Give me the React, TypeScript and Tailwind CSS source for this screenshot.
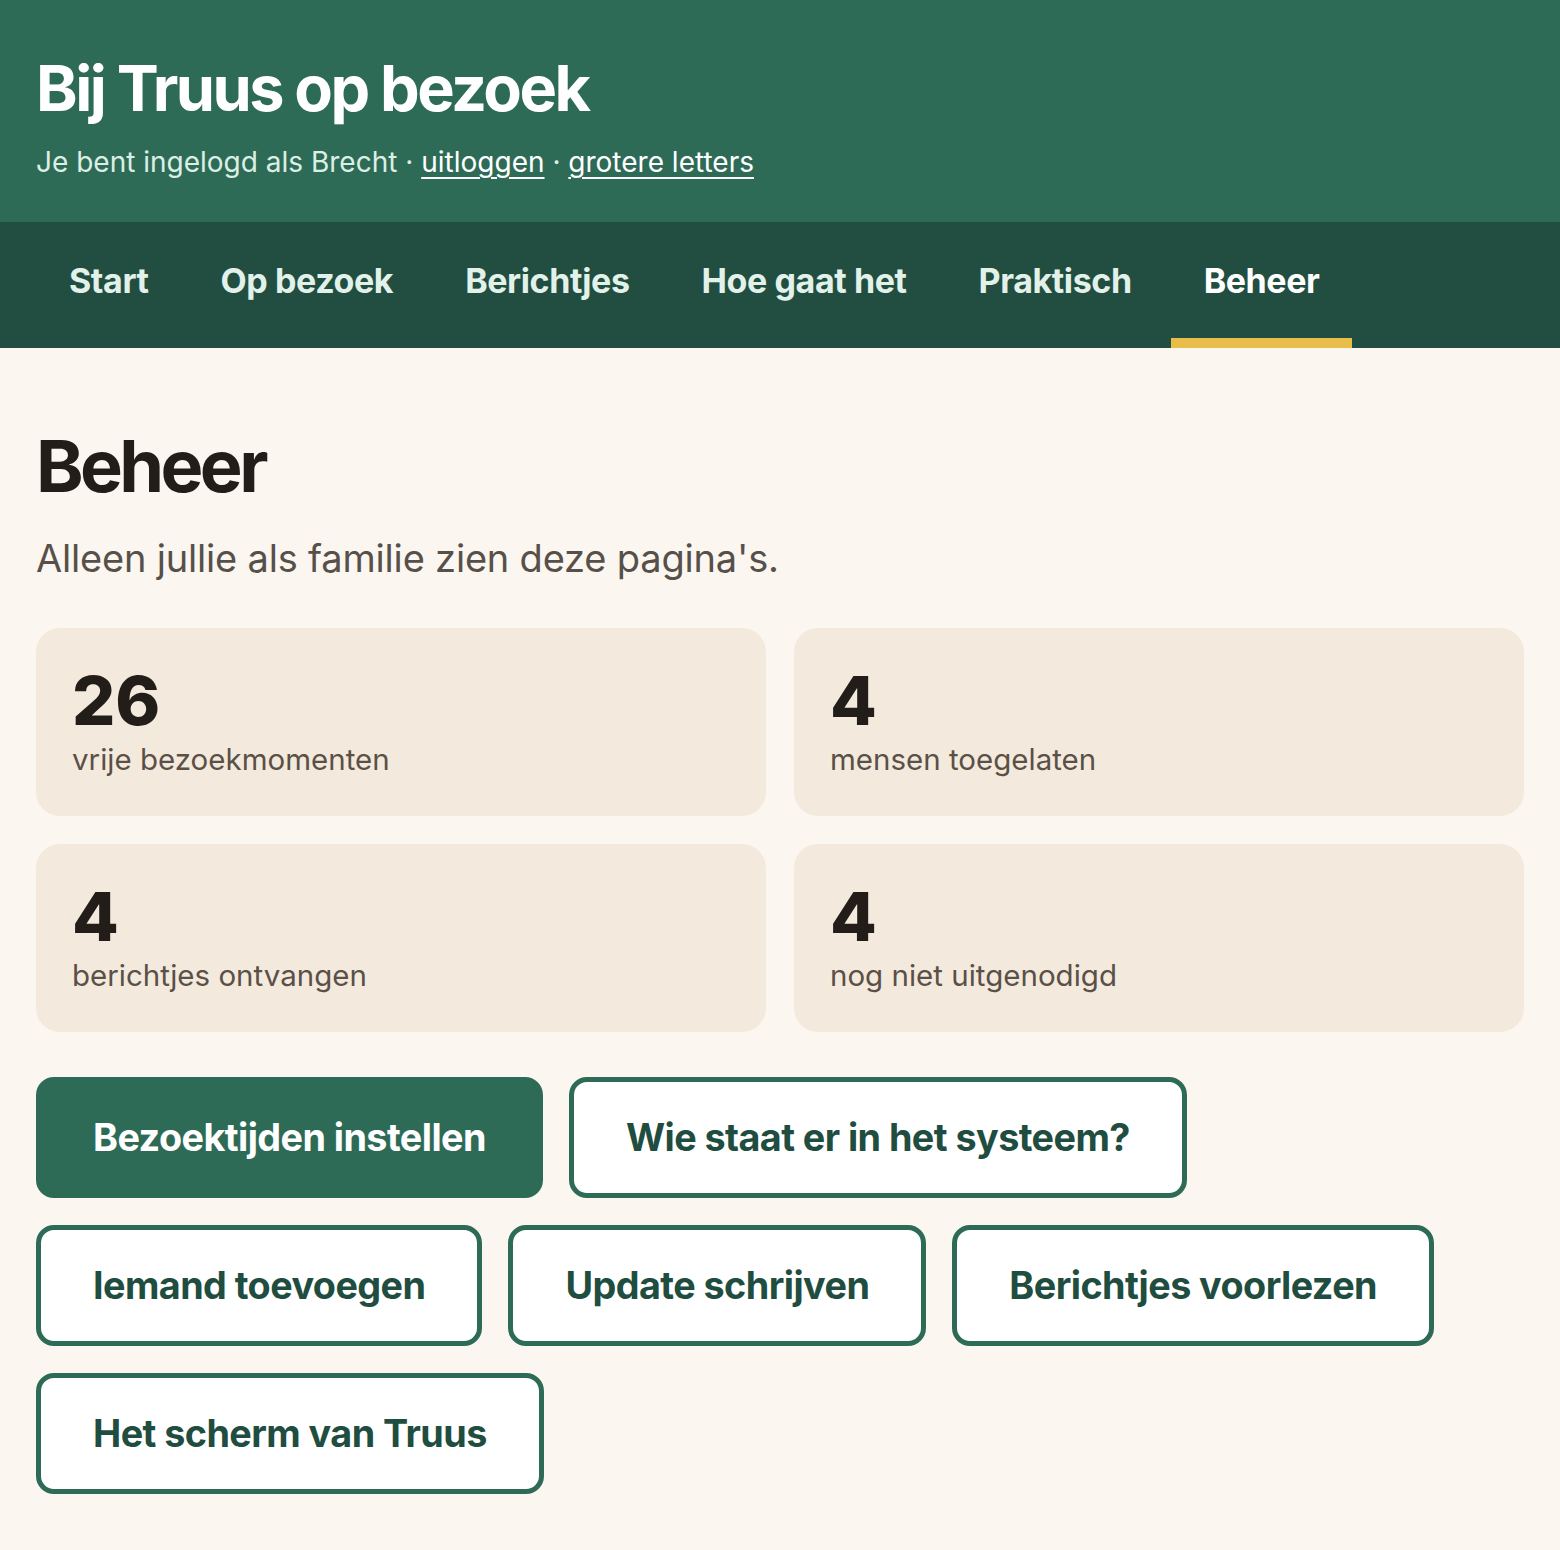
const navItems = ["Start", "Op bezoek", "Berichtjes", "Hoe gaat het", "Praktisch", "Beheer"];

const stats = [
	{ value: "26", label: "vrije bezoekmomenten" },
	{ value: "4", label: "mensen toegelaten" },
	{ value: "4", label: "berichtjes ontvangen" },
	{ value: "4", label: "nog niet uitgenodigd" },
];

const actions = [
	{ label: "Bezoektijden instellen", primary: true },
	{ label: "Wie staat er in het systeem?", primary: false },
	{ label: "Iemand toevoegen", primary: false },
	{ label: "Update schrijven", primary: false },
	{ label: "Berichtjes voorlezen", primary: false },
	{ label: "Het scherm van Truus", primary: false },
];

export default function App() {
	return (
		<div className="min-h-screen bg-[#fbf6f0] font-['Inter','Noto_Sans',sans-serif]">
			<header className="bg-[#2e6b57] px-9 pt-[52px] pb-[44px]">
				<h1 className="text-[63px] leading-[72px] font-bold tracking-[-0.04em] text-white">
					Bij Truus op bezoek
				</h1>
				<p className="mt-[22px] text-[28px] leading-[32px] text-[#dcefe5]">
					Je bent ingelogd als Brecht ·{" "}
					<a href="#" className="underline underline-offset-[5px] decoration-2 text-white">
						uitloggen
					</a>{" "}
					·{" "}
					<a href="#" className="underline underline-offset-[5px] decoration-2 text-white">
						grotere letters
					</a>
				</p>
			</header>

			<nav className="bg-[#214e40] px-9">
				<ul className="flex gap-[6px]">
					{navItems.map((item) => {
						const active = item === "Beheer";
						return (
							<li key={item}>
								<a
									href="#"
									className={`block h-[126px] px-[33px] pt-[38px] text-[34px] leading-[42px] font-bold tracking-[-0.012em] border-b-[10px] ${
										active ? "text-white border-[#e8bd4a]" : "text-[#e2f2ea] border-transparent"
									}`}
								>
									{item}
								</a>
							</li>
						);
					})}
				</ul>
			</nav>

			<main className="px-9 pt-[78px] pb-[56px]">
				<h2 className="text-[72px] leading-[80px] font-bold tracking-[-0.05em] text-[#221d18]">Beheer</h2>
				<p className="mt-[28px] text-[38px] leading-[48px] text-[#57504a] tracking-[-0.005em]">
					Alleen jullie als familie zien deze pagina's.
				</p>

				<div className="mt-[46px] grid grid-cols-2 gap-[28px]">
					{stats.map((s) => (
						<div key={s.label} className="h-[188px] rounded-[24px] bg-[#f3eadd] px-9 pt-[36px]">
							<div className="text-[68px] leading-[72px] font-extrabold text-[#221d18]">{s.value}</div>
							<div className="mt-[5px] text-[29.5px] leading-[36px] text-[#5b5047]">{s.label}</div>
						</div>
					))}
				</div>

				<div className="mt-[45px] flex flex-wrap gap-x-[26px] gap-y-[27px] max-w-[1420px]">
					{actions.map((a) => (
						<button
							key={a.label}
							className={`h-[121px] rounded-[18px] border-[5px] border-[#2e6b57] px-[52px] text-[37.75px] font-bold tracking-[-0.015em] ${
								a.primary ? "bg-[#2e6b57] text-white" : "bg-white text-[#1f4d3f]"
							}`}
						>
							{a.label}
						</button>
					))}
				</div>
			</main>
		</div>
	);
}
